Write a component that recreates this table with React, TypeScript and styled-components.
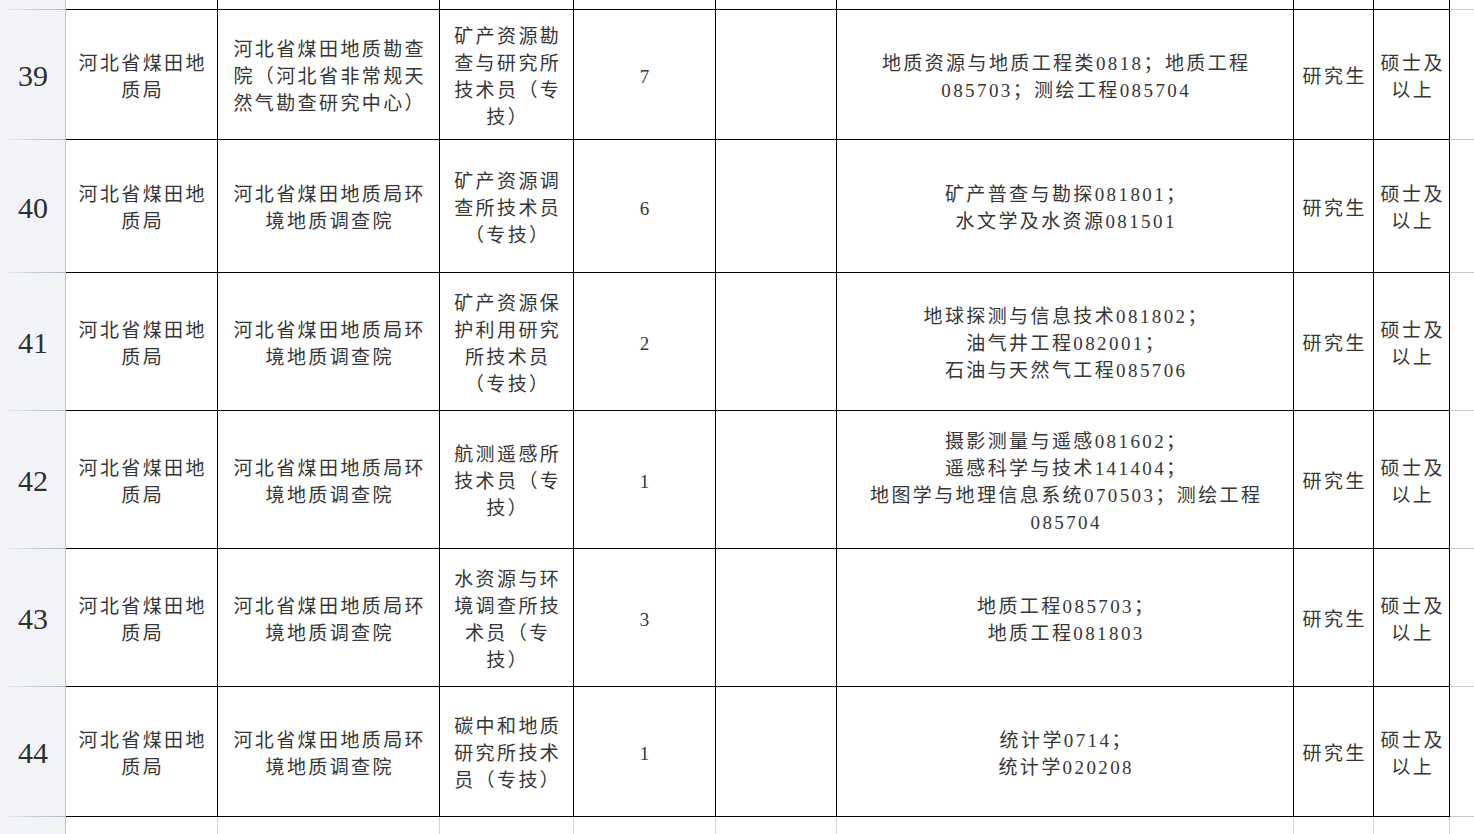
import React from "react";
import styled, { createGlobalStyle, css } from "styled-components";

const Global = createGlobalStyle`
  html, body { margin: 0; padding: 0; background: #ffffff; overflow: hidden; }
  body { font-family: "Liberation Serif", "Noto Sans CJK SC", serif; }
`;

const COLS = "66px 152px 222px 134px 142px 121px 457px 80px 76px 1fr";

const Sheet = styled.div`
  display: grid;
  grid-template-columns: ${COLS};
  width: 1474px;
  height: 834px;
  overflow: hidden;
  grid-auto-rows: min-content;
`;

type Kind = "data" | "blank" | "edge" | "edgeBlank";

const Cell = styled.div<{ $kind: Kind; $h: number }>`
  box-sizing: border-box;
  height: ${(p) => p.$h}px;
  padding-top: 4px;
  display: flex;
  flex-direction: column;
  align-items: center;
  justify-content: center;
  overflow: hidden;
  color: #363636;
  font-size: 19px;
  line-height: 27px;
  letter-spacing: 2.4px;
  text-align: center;
  ${(p) =>
    p.$kind === "data" &&
    css`
      border-right: 1px solid #000;
      border-bottom: 1px solid #000;
    `}
  ${(p) =>
    p.$kind === "blank" &&
    css`
      border-right: 1px solid #d4d4d4;
    `}
  ${(p) =>
    p.$kind === "edge" &&
    css`
      border-bottom: 1px solid #c8c8c8;
    `}
`;

const HeadCell = styled.div<{ $h: number; $last?: boolean }>`
  box-sizing: border-box;
  height: ${(p) => p.$h}px;
  display: flex;
  align-items: center;
  justify-content: center;
  padding-top: 2px;
  background: #f3f4f8;
  box-shadow: inset -1px 0 0 #bdc0d3;
  font-family: "Liberation Serif", serif;
  font-size: 30px;
  color: #2e2e2e;
  position: relative;
  ${(p) =>
    !p.$last &&
    css`
      &::after {
        content: "";
        position: absolute;
        left: 3px;
        right: 1px;
        bottom: 0;
        height: 1px;
        background: linear-gradient(to right, #f0f1f6 0%, #c9cbd9 50%, #b4b7ca 100%);
      }
    `}
`;

const Line = styled.span`
  display: block;
  white-space: nowrap;
  padding-left: 2.4px;
`;

type Row = {
  n: string;
  org: string[];
  unit: string[];
  job: string[];
  count: string;
  major: string[];
};

const ORG = ["河北省煤田地", "质局"];
const UNIT_ENV = ["河北省煤田地质局环", "境地质调查院"];

const rows: Row[] = [
  {
    n: "39",
    org: ORG,
    unit: ["河北省煤田地质勘查", "院（河北省非常规天", "然气勘查研究中心）"],
    job: ["矿产资源勘", "查与研究所", "技术员（专", "技）"],
    count: "7",
    major: ["地质资源与地质工程类0818；地质工程", "085703；测绘工程085704"],
  },
  {
    n: "40",
    org: ORG,
    unit: UNIT_ENV,
    job: ["矿产资源调", "查所技术员", "（专技）"],
    count: "6",
    major: ["矿产普查与勘探081801；", "水文学及水资源081501"],
  },
  {
    n: "41",
    org: ORG,
    unit: UNIT_ENV,
    job: ["矿产资源保", "护利用研究", "所技术员", "（专技）"],
    count: "2",
    major: ["地球探测与信息技术081802；", "油气井工程082001；", "石油与天然气工程085706"],
  },
  {
    n: "42",
    org: ORG,
    unit: UNIT_ENV,
    job: ["航测遥感所", "技术员（专", "技）"],
    count: "1",
    major: [
      "摄影测量与遥感081602；",
      "遥感科学与技术141404；",
      "地图学与地理信息系统070503；测绘工程",
      "085704",
    ],
  },
  {
    n: "43",
    org: ORG,
    unit: UNIT_ENV,
    job: ["水资源与环", "境调查所技", "术员（专", "技）"],
    count: "3",
    major: ["地质工程085703；", "地质工程081803"],
  },
  {
    n: "44",
    org: ORG,
    unit: UNIT_ENV,
    job: ["碳中和地质", "研究所技术", "员（专技）"],
    count: "1",
    major: ["统计学0714；", "统计学020208"],
  },
];

const heights = [130, 133, 138, 138, 138, 130];

const Lines: React.FC<{ items: string[] }> = ({ items }) => (
  <>
    {items.map((t, i) => (
      <Line key={i}>{t}</Line>
    ))}
  </>
);

export default function App() {
  return (
    <>
      <Global />
      <Sheet>
        {/* partial row above */}
        <HeadCell $h={10} />
        {Array.from({ length: 8 }).map((_, i) => (
          <Cell key={`top${i}`} $kind="data" $h={10} />
        ))}
        <Cell $kind="edge" $h={10} />

        {rows.map((r, idx) => {
          const h = heights[idx];
          return (
            <React.Fragment key={r.n}>
              <HeadCell $h={h}>{r.n}</HeadCell>
              <Cell $kind="data" $h={h}>
                <Lines items={r.org} />
              </Cell>
              <Cell $kind="data" $h={h}>
                <Lines items={r.unit} />
              </Cell>
              <Cell $kind="data" $h={h}>
                <Lines items={r.job} />
              </Cell>
              <Cell $kind="data" $h={h}>
                <Line>{r.count}</Line>
              </Cell>
              <Cell $kind="data" $h={h} />
              <Cell $kind="data" $h={h}>
                <Lines items={r.major} />
              </Cell>
              <Cell $kind="data" $h={h}>
                <Line>研究生</Line>
              </Cell>
              <Cell $kind="data" $h={h}>
                <Lines items={["硕士及", "以上"]} />
              </Cell>
              <Cell $kind="edge" $h={h} />
            </React.Fragment>
          );
        })}

        {/* empty row below */}
        <HeadCell $h={40} $last />
        {Array.from({ length: 8 }).map((_, i) => (
          <Cell key={`bot${i}`} $kind="blank" $h={40} />
        ))}
        <Cell $kind="edgeBlank" $h={40} />
      </Sheet>
    </>
  );
}
